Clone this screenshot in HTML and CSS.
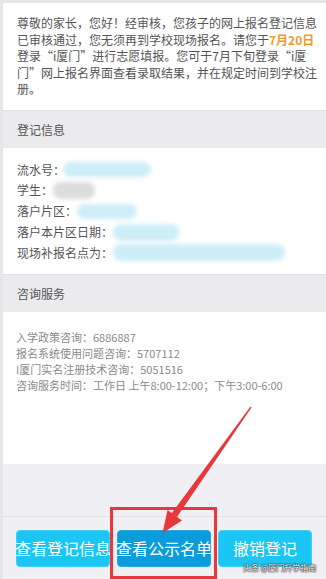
FILE: index.html
```html
<!DOCTYPE html>
<html lang="zh-CN">
<head>
<meta charset="utf-8">
<title>报名结果</title>
<link rel="stylesheet" href="styles.css">
</head>
<body>
<div class="page">
  <section class="notice"><span>尊敬的家长，您好！经审核，您孩子的网上报名登记信息</span><span>已审核通过，您无须再到学校现场报名。请您于</span><span class="hl">7月20日</span><span>登录“i厦门”进行志愿填报。您可于7月下旬登录“i厦门”网上报名界面查看录取结果，并在规定时间到学校注册。</span></section>
  <div class="sec-head">登记信息</div>
  <section class="info">
    <div class="row">流水号：<span class="blur b1"></span></div>
    <div class="row">学生：<span class="blur b2"></span></div>
    <div class="row">落户片区：<span class="blur b3"></span></div>
    <div class="row">落户本片区日期：<span class="blur b4"></span></div>
    <div class="row">现场补报名点为：<span class="blur b5"></span></div>
  </section>
  <div class="sec-head">咨询服务</div>
  <section class="consult">
    <div>入学政策咨询：6886887</div>
    <div>报名系统使用问题咨询：5707112</div>
    <div>I厦门实名注册技术咨询：5051516</div>
    <div>咨询服务时间：工作日 上午8:00-12:00；下午3:00-6:00</div>
  </section>
  <footer class="foot">
    <div class="spacer"></div>
    <div class="btns">
      <button class="btn">查看登记信息</button>
      <button class="btn dark">查看公示名单</button>
      <button class="btn">撤销登记</button>
    </div>
  </footer>
</div>
<div class="mark-box"></div>
<svg class="arrow" width="326" height="579" viewBox="0 0 326 579">
  <polygon fill="#e8383b" points="250.5,406.5 251.5,407.5 177,517 171.5,513.5"/>
  <polygon fill="#e8383b" points="162.5,533 167.5,510 182,520.5"/>
</svg>
<div class="watermark">头条 @厦门升学指南</div>
</body>
</html>
```
FILE: styles.css
```css
html, body {
  margin: 0;
  padding: 0;
}
body {
  width: 326px;
  height: 579px;
  overflow: hidden;
  background: #e6e6e8;
  font-family: "Noto Sans CJK SC", "Microsoft YaHei", sans-serif;
  position: relative;
}
.page {
  margin: 3px 0 0 3px;
  height: 576px;
  display: flex;
  flex-direction: column;
  background: #fff;
}
.notice {
  background: #fff;
  color: #555;
  font-size: 12px;
  line-height: 16.5px;
  padding: 12px 8px 12.5px 14px;
}
.hl {
  color: #f39a2b;
  font-weight: bold;
}
.sec-head {
  background: #ebebed;
  border-top: 1px solid #e2e2e4;
  height: 37px;
  line-height: 38px;
  padding-left: 14px;
  font-size: 12px;
  color: #555;
}
.info {
  padding: 11.5px 0 10.5px 14px;
  font-size: 12px;
  line-height: 20.75px;
  color: #555;
}
.row {
  display: flex;
  align-items: center;
  height: 20.75px;
}
.blur {
  display: inline-block;
  height: 15px;
  border-radius: 8px;
  background: #cdeef7;
  filter: blur(2px);
}
.b1 { width: 88px; margin-left: -2px; }
.b2 { width: 42px; background: #dcdcdc; height: 17px; }
.b3 { width: 60px; }
.b4 { width: 66px; height: 17px; }
.b5 { width: 172px; height: 17px; }
.consult {
  padding: 17px 0 71px 13px;
  font-size: 11px;
  line-height: 16px;
  color: #8a8a8a;
}
.foot {
  flex: 1;
  background: #f0f0f4;
  display: flex;
  flex-direction: column;
}
.spacer {
  height: 52px;
  border-bottom: 1px solid #e3e3e7;
}
.btns {
  display: flex;
  gap: 7px;
  padding: 13px 0 0 13px;
}
.btn {
  width: 94px;
  height: 37px;
  padding: 0;
  border: 1px solid #3fd0f6;
  border-radius: 4px;
  background: #1cc6f4;
  color: #fff;
  font-family: "Noto Sans CJK SC", sans-serif;
  font-size: 16px;
  white-space: nowrap;
  overflow: visible;
  display: flex;
  align-items: center;
  justify-content: center;
}
.btn.dark {
  background: #0b9ddb;
  border-color: #2aa6de;
}
.mark-box {
  position: absolute;
  left: 110px;
  top: 507px;
  width: 101px;
  height: 66px;
  border: 3px solid #e8383b;
}
.arrow {
  position: absolute;
  left: 0;
  top: 0;
}
.watermark {
  position: absolute;
  left: 243px;
  top: 563px;
  font-size: 8px;
  line-height: 10px;
  color: #fff;
  text-shadow: 0 0 2px #222, 0 0 1px #222, 0 0 1px #222;
  white-space: nowrap;
}
```
